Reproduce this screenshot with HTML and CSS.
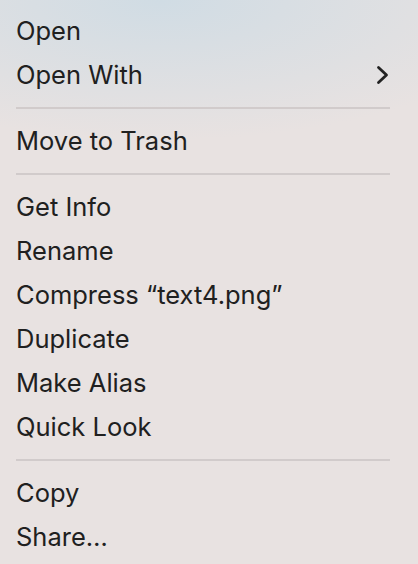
FILE: index.html
```html
<!DOCTYPE html>
<html>
<head>
<meta charset="utf-8">
<link rel="stylesheet" href="styles.css">
</head>
<body>
<div class="menu">
  <div class="item">Open</div>
  <div class="item has-sub">Open With
    <svg class="chev" width="14" height="20" viewBox="0 0 14 20"><path d="M2.5 2.5 L10.5 10 L2.5 17.5" fill="none" stroke="#222" stroke-width="2.8" stroke-linecap="round" stroke-linejoin="round"/></svg>
  </div>
  <div class="sep"></div>
  <div class="item">Move to Trash</div>
  <div class="sep"></div>
  <div class="item">Get Info</div>
  <div class="item">Rename</div>
  <div class="item">Compress “text4.png”</div>
  <div class="item">Duplicate</div>
  <div class="item">Make Alias</div>
  <div class="item">Quick Look</div>
  <div class="sep"></div>
  <div class="item">Copy</div>
  <div class="item">Share…</div>
</div>
</body>
</html>
```
FILE: styles.css
```css
html, body {
  margin: 0;
  padding: 0;
  width: 418px;
  height: 564px;
  overflow: hidden;
}
body {
  background:
    radial-gradient(ellipse 380px 140px at 160px 0px, rgba(208,220,228,1), rgba(208,220,228,0) 100%),
    #e8e2e1;
  font-family: Inter, "Noto Sans", sans-serif;
  color: #202020;
}
.menu {
  display: flex;
  flex-direction: column;
  padding: 9px 28px 0 16px;
}
.item {
  box-sizing: border-box;
  height: 44px;
  padding-bottom: 2px;
  display: flex;
  align-items: center;
  justify-content: space-between;
  font-size: 25.5px;
}
.chev {
  margin-top: 2px;
}
.sep {
  height: 22px;
  display: flex;
  align-items: center;
}
.sep::before {
  content: "";
  display: block;
  width: 376px;
  height: 2px;
  background: #d1cbcb;
}
```
